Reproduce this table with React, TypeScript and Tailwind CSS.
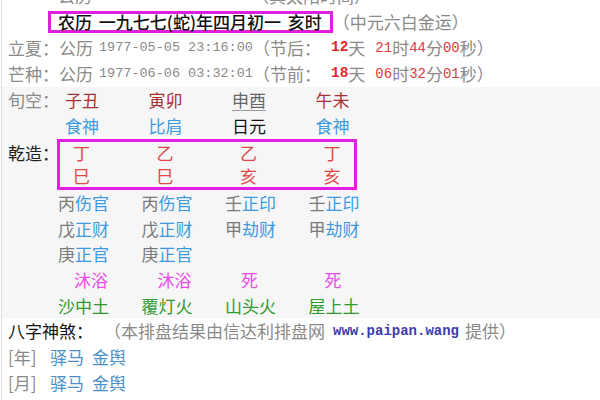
import React from "react";

const CJK = { fontFamily: '"Noto Sans CJK SC", "Noto Sans", sans-serif' };
const MONO = "font-['Liberation_Mono',monospace]";

const cols = "grid grid-cols-[55px_83.5px_83.5px_83.5px_83.5px] items-center";

function Row({ label, cells, pad, h = "h-[26px]" }: { label?: string; cells: React.ReactNode[]; pad: string; h?: string }) {
  return (
    <div className={`${cols} ${h}`}>
      <div className="pl-[6px] text-[#8a8a8a] whitespace-nowrap">{label}</div>
      {cells.map((c, i) => (
        <div key={i} className={`${pad} whitespace-nowrap`}>
          {c}
        </div>
      ))}
    </div>
  );
}

function Hidden({ s, g }: { s: string; g: string }) {
  return (
    <span>
      <span className="text-[#7a7a7a]">{s}</span>
      <span className="text-[#3d9ae0]">{g}</span>
    </span>
  );
}

function JieLine({ label, date, kind, days, hh, mm, ss }: { label: string; date: string; kind: string; days: string; hh: string; mm: string; ss: string }) {
  return (
    <div className="h-[26px] flex items-center whitespace-pre text-[#8a8a8a] pl-[6px]">
      <span>{label}：公历</span>
      <span className={`${MONO} text-[13.5px] ml-[6px]`}>{date}</span>
      <span>（{kind}：</span>
      <span className={`${MONO} text-[14.5px] font-bold text-[#e02a2a] ml-[10px]`}>{days}</span>
      <span>天</span>
      <span className={`${MONO} text-[14px] text-[#e03a3a] ml-[10px]`}>{hh}</span>
      <span>时</span>
      <span className={`${MONO} text-[14px] text-[#e03a3a]`}>{mm}</span>
      <span>分</span>
      <span className={`${MONO} text-[14px] text-[#e03a3a]`}>{ss}</span>
      <span>秒）</span>
    </div>
  );
}

export default function App() {
  return (
    <div className="w-[600px] h-[400px] overflow-hidden bg-white text-[17px]" style={CJK}>
      <div className="ml-px h-full border-l border-[#dcdcdc] flex flex-col">
        {/* top lines */}
        <div className="mt-[-17px]">
          <div className="h-[26px] flex items-center whitespace-pre text-[#8a8a8a] pl-[56px]">
            <span>公历</span>
            <span className={`${MONO} text-[13.5px] ml-[6px]`}>1977-05-18 21:00:00</span>
            <span>（真太阳时间）</span>
          </div>
          <div className="h-[26px] flex items-center whitespace-pre">
            <div className="ml-[46px] h-[22px] border-[3px] border-[#e01fe0] pl-[7px] pr-[8px] flex items-center text-[#111] font-medium [word-spacing:3px]">
              农历 一九七七(蛇)年四月初一 亥时
            </div>
            <span className="text-[#8a8a8a]">（中元六白金运）</span>
          </div>
          <JieLine label="立夏" date="1977-05-05 23:16:00" kind="节后" days="12" hh="21" mm="44" ss="00" />
          <JieLine label="芒种" date="1977-06-06 03:32:01" kind="节前" days="18" hh="06" mm="32" ss="01" />
        </div>

        {/* chart */}
        <div className="bg-[#f6f6f6]">
          <Row
            label="旬空："
            pad="pl-[8px]"
            cells={[
              <span className="text-[#a83232]">子丑</span>,
              <span className="text-[#a83232]">寅卯</span>,
              <span className="text-[#666] underline decoration-[#999] underline-offset-[3px]">申酉</span>,
              <span className="text-[#a83232]">午未</span>,
            ]}
          />
          <Row
            pad="pl-[8px]"
            cells={[
              <span className="text-[#3d9ae0]">食神</span>,
              <span className="text-[#3d9ae0]">比肩</span>,
              <span className="text-[#111]">日元</span>,
              <span className="text-[#3d9ae0]">食神</span>,
            ]}
          />
          <div className="flex h-[51px]">
            <div className="w-[55px] pl-[6px] pt-[3px] whitespace-nowrap">
              <div className="h-[22px] leading-[22px] text-[#222]">乾造：</div>
            </div>
            <div className="w-[300px] border-[3px] border-[#e01fe0] text-[#e04848]">
              <div className="grid grid-cols-[83.5px_83.5px_83.5px_43.5px] h-[22px] leading-[22px]">
                <span className="pl-[13px]">丁</span>
                <span className="pl-[13px]">乙</span>
                <span className="pl-[13px]">乙</span>
                <span className="pl-[13px]">丁</span>
              </div>
              <div className="grid grid-cols-[83.5px_83.5px_83.5px_43.5px] h-[23px] leading-[23px]">
                <span className="pl-[13px]">巳</span>
                <span className="pl-[13px]">巳</span>
                <span className="pl-[13px]">亥</span>
                <span className="pl-[13px]">亥</span>
              </div>
            </div>
          </div>
          <Row
            pad="pl-[1px]"
            cells={[<Hidden s="丙" g="伤官" />, <Hidden s="丙" g="伤官" />, <Hidden s="壬" g="正印" />, <Hidden s="壬" g="正印" />]}
          />
          <Row
            pad="pl-[1px]"
            h="h-[25px]"
            cells={[<Hidden s="戊" g="正财" />, <Hidden s="戊" g="正财" />, <Hidden s="甲" g="劫财" />, <Hidden s="甲" g="劫财" />]}
          />
          <Row pad="pl-[1px]" cells={[<Hidden s="庚" g="正官" />, <Hidden s="庚" g="正官" />, <span />, <span />]} />
          <Row
            pad="pl-[17px]"
            cells={[
              <span className="text-[#e64ce6]">沐浴</span>,
              <span className="text-[#e64ce6]">沐浴</span>,
              <span className="text-[#e64ce6]">死</span>,
              <span className="text-[#e64ce6]">死</span>,
            ]}
          />
          <Row
            pad="pl-[1px]"
            h="h-[25px]"
            cells={[
              <span className="text-[#2f9a2f]">沙中土</span>,
              <span className="text-[#2f9a2f]">覆灯火</span>,
              <span className="text-[#2f9a2f]">山头火</span>,
              <span className="text-[#2f9a2f]">屋上土</span>,
            ]}
          />
        </div>

        {/* footer */}
        <div className="pl-[6px]">
          <div className="h-[26px] flex items-center whitespace-pre">
            <span className="text-[#111]">八字神煞：</span>
            <span className="text-[#8a8a8a] ml-[11px]">（本排盘结果由信达利排盘网</span>
            <span className={`${MONO} text-[14px] font-bold text-[#3b3bb0] ml-[8px]`}>www.paipan.wang</span>
            <span className="text-[#8a8a8a] ml-[6px]">提供）</span>
          </div>
          <div className="h-[26px] flex items-center whitespace-pre">
            <span className="w-[42px] text-[#8a8a8a]">[年]</span>
            <span className="text-[#4b8fc8]">驿马</span>
            <span className="text-[#4b8fc8] ml-[8px]">金舆</span>
          </div>
          <div className="h-[26px] flex items-center whitespace-pre">
            <span className="w-[42px] text-[#8a8a8a]">[月]</span>
            <span className="text-[#4b8fc8]">驿马</span>
            <span className="text-[#4b8fc8] ml-[8px]">金舆</span>
          </div>
        </div>
      </div>
    </div>
  );
}
